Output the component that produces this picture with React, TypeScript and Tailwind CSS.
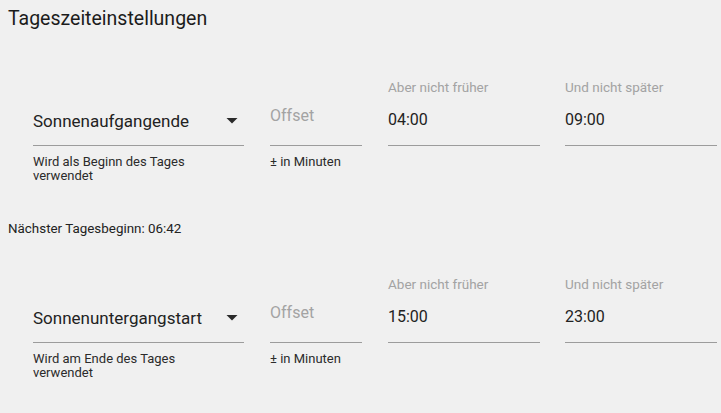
const font = { fontFamily: "Roboto, 'Noto Sans', sans-serif" }

type TimeFieldProps = {
  label: string
  value: string
  className?: string
}

const ArrowDown = () => (
  <svg width="24" height="24" viewBox="0 0 24 24" className="shrink-0">
    <path d="M6.5 10l5.5 5.5 5.5-5.5z" fill="#2a2a2a" />
  </svg>
)

const SelectField = ({ value, helper }: { value: string; helper: string }) => (
  <div className="ml-[25px] flex w-[211px] shrink-0 flex-col">
    <div className="h-[16px]" />
    <div className="mt-[13px] flex h-[38px] items-start border-b border-[#9c9c9c]">
      <span className="flex-1 pt-[1px] text-[17px] leading-[24px] text-[#222]">{value}</span>
      <ArrowDown />
    </div>
    <p className="mt-[9px] w-[185px] text-[13px] leading-[14px] text-[#2b2b2b]">{helper}</p>
  </div>
)

const OffsetField = () => (
  <div className="ml-[26px] flex w-[92px] shrink-0 flex-col">
    <div className="h-[16px]" />
    <div className="mt-[13px] h-[38px] border-b border-[#9c9c9c]">
      <span className="block -translate-y-[4px] text-[16px] leading-[24px] text-[#a3a3a3]">Offset</span>
    </div>
    <p className="mt-[9px] text-[13px] leading-[14px] text-[#2b2b2b]">± in Minuten</p>
  </div>
)

const TimeField = ({ label, value, className }: TimeFieldProps) => (
  <div className={`flex w-[152px] shrink-0 flex-col ${className ?? ""}`}>
    <label className="h-[16px] whitespace-nowrap text-[13.5px] leading-[16px] text-[#a3a3a3]">{label}</label>
    <div className="mt-[13px] h-[38px] border-b border-[#9c9c9c]">
      <span className="block text-[16px] leading-[24px] text-[#222]">{value}</span>
    </div>
  </div>
)

const DayRow = ({
  select,
  helper,
  from,
  to
}: {
  select: string
  helper: string
  from: string
  to: string
}) => (
  <div className="flex items-start">
    <SelectField value={select} helper={helper} />
    <OffsetField />
    <TimeField label="Aber nicht früher" value={from} className="ml-[26px]" />
    <TimeField label="Und nicht später" value={to} className="ml-[25px]" />
  </div>
)

export default function App() {
  return (
    <main className="min-h-[413px] w-full overflow-hidden bg-[#f0f0f0] p-2" style={font}>
      <h2 className="text-[19.5px] leading-[22px] text-[#1c1c1c]">Tageszeiteinstellungen</h2>

      <div className="mt-[49px]">
        <DayRow
          select="Sonnenaufgangende"
          helper="Wird als Beginn des Tages verwendet"
          from="04:00"
          to="09:00"
        />
      </div>

      <p className="mt-[38px] text-[13.4px] leading-[16px] text-[#222]">Nächster Tagesbeginn: 06:42</p>

      <div className="mt-[39px]">
        <DayRow
          select="Sonnenuntergangstart"
          helper="Wird am Ende des Tages verwendet"
          from="15:00"
          to="23:00"
        />
      </div>
    </main>
  )
}
